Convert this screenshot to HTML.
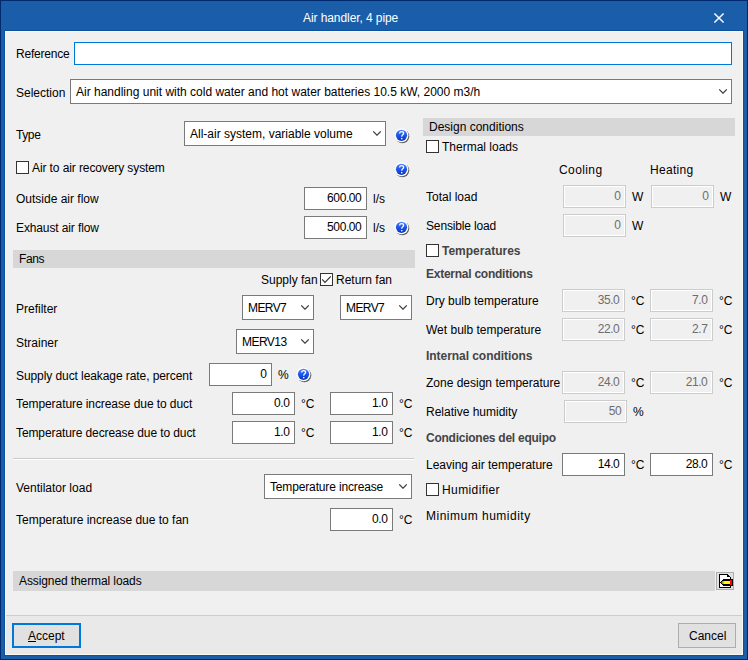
<!DOCTYPE html>
<html><head><meta charset="utf-8"><title>Air handler, 4 pipe</title>
<style>
html,body{margin:0;padding:0;}
body{width:748px;height:660px;position:relative;overflow:hidden;background:#1a5ea9;font-family:"Liberation Sans",sans-serif;font-size:12px;color:#000;}
.frame{position:absolute;left:0;top:0;width:748px;height:660px;box-sizing:border-box;border:1px solid #002a6e;}
.client{position:absolute;left:5px;top:31px;width:738px;height:624px;background:#f0f0f0;box-sizing:border-box;border:1px solid #fbf8f2;}
.edge{position:absolute;left:4px;top:30px;width:740px;height:626px;box-sizing:border-box;border:1px solid #0a52a0;}
.t{position:absolute;line-height:14px;white-space:pre;}
.wt{color:#fff;}
.gr{color:#6d6d6d;}
.num{letter-spacing:-0.4px;}
.b{font-weight:bold;color:#444;letter-spacing:-0.25px;}
.ab{position:absolute;}
.bar{position:absolute;background:#d7d7d7;}
.sep{position:absolute;background:#c9c9c9;}
.sep2{position:absolute;background:#cdcdcd;}
.inp{position:absolute;box-sizing:border-box;background:#fff;border:1px solid #7a7a7a;}
.inp.dis{background:#f0f0f0;border-color:#cccccc;box-shadow:inset 0 0 0 1px #fff;}
.cmb{position:absolute;box-sizing:border-box;background:#fff;border:1px solid #7a7a7a;}
.chk{position:absolute;width:13px;height:13px;box-sizing:border-box;background:#fff;border:1px solid #333;}
svg{display:block;}
svg.ab{position:absolute;}
</style></head><body>
<div class="frame"></div>
<div class="edge"></div>
<div class="client"></div>
<div class="t wt" style="left:303px;top:11px;letter-spacing:-0.08px">Air handler, 4 pipe</div>
<svg class="ab" style="left:713px;top:12px" width="12" height="12" viewBox="0 0 12 12"><path d="M1.4 1.4 L10.6 10.6 M10.6 1.4 L1.4 10.6" stroke="#fff" stroke-width="1.45"/></svg>
<div class="t" style="left:16px;top:47px;letter-spacing:-0.2px">Reference</div>
<div class="ab" style="left:74px;top:42px;width:658px;height:23px;background:#fff;border:1px solid #0078d7;box-sizing:border-box"></div>
<div class="t" style="left:16px;top:86px;">Selection</div>
<div class="cmb" style="left:70px;top:79px;width:662px;height:25px;"></div>
<div class="t" style="left:76px;top:85px;">Air handling unit with cold water and hot water batteries 10.5 kW, 2000 m3/h</div>
<div class="ab" style="left:719px;top:89px;width:8px;height:5px"><svg width="8" height="5" viewBox="0 0 8 5"><path d="M0.2 0.4 L4 4.2 L7.8 0.4" fill="none" stroke="#404040" stroke-width="1.25"/></svg></div>
<div class="t" style="left:16px;top:128px;letter-spacing:-0.4px">Type</div>
<div class="cmb" style="left:184px;top:121px;width:202px;height:25px;"></div>
<div class="t" style="left:190px;top:127px;">All-air system, variable volume</div>
<div class="ab" style="left:373px;top:131px;width:8px;height:5px"><svg width="8" height="5" viewBox="0 0 8 5"><path d="M0.2 0.4 L4 4.2 L7.8 0.4" fill="none" stroke="#404040" stroke-width="1.25"/></svg></div>
<div class="ab" style="left:394px;top:128px;width:18px;height:18px"><svg width="18" height="18" viewBox="0 0 18 18">
<defs><linearGradient id="hg" x1="0" y1="0" x2="0" y2="1"><stop offset="0" stop-color="#4f86ff"/><stop offset="0.5" stop-color="#1f55ee"/><stop offset="1" stop-color="#0a36b8"/></linearGradient></defs>
<circle cx="8.4" cy="8.3" r="6.9" fill="#303030" opacity="0.75"/>
<circle cx="7.5" cy="7.3" r="6.9" fill="#fff"/>
<circle cx="7.5" cy="7.3" r="5.6" fill="url(#hg)"/>
<path d="M5.6 5.5 Q5.7 3.5 7.6 3.5 Q9.6 3.5 9.6 5.3 Q9.6 6.3 8.5 7.0 Q7.7 7.5 7.7 8.8" fill="none" stroke="#fff" stroke-width="1.25"/>
<rect x="7.05" y="10.0" width="1.35" height="1.35" fill="#fff"/>
</svg></div>
<div class="chk" style="left:16px;top:161px;"></div>
<div class="t" style="left:32px;top:161px;letter-spacing:-0.1px">Air to air recovery system</div>
<div class="ab" style="left:394px;top:162px;width:18px;height:18px"><svg width="18" height="18" viewBox="0 0 18 18">
<defs><linearGradient id="hg" x1="0" y1="0" x2="0" y2="1"><stop offset="0" stop-color="#4f86ff"/><stop offset="0.5" stop-color="#1f55ee"/><stop offset="1" stop-color="#0a36b8"/></linearGradient></defs>
<circle cx="8.4" cy="8.3" r="6.9" fill="#303030" opacity="0.75"/>
<circle cx="7.5" cy="7.3" r="6.9" fill="#fff"/>
<circle cx="7.5" cy="7.3" r="5.6" fill="url(#hg)"/>
<path d="M5.6 5.5 Q5.7 3.5 7.6 3.5 Q9.6 3.5 9.6 5.3 Q9.6 6.3 8.5 7.0 Q7.7 7.5 7.7 8.8" fill="none" stroke="#fff" stroke-width="1.25"/>
<rect x="7.05" y="10.0" width="1.35" height="1.35" fill="#fff"/>
</svg></div>
<div class="t" style="left:16px;top:192px;">Outside air flow</div>
<div class="inp" style="left:304px;top:187px;width:63px;height:23px;"></div>
<div class="t num" style="right:386.6px;top:191px;">600.00</div>
<div class="t" style="left:373px;top:192px;">l/s</div>
<div class="t" style="left:16px;top:221px;letter-spacing:-0.12px">Exhaust air flow</div>
<div class="inp" style="left:304px;top:216px;width:63px;height:23px;"></div>
<div class="t num" style="right:386.6px;top:220px;">500.00</div>
<div class="t" style="left:373px;top:221px;">l/s</div>
<div class="ab" style="left:394px;top:220px;width:18px;height:18px"><svg width="18" height="18" viewBox="0 0 18 18">
<defs><linearGradient id="hg" x1="0" y1="0" x2="0" y2="1"><stop offset="0" stop-color="#4f86ff"/><stop offset="0.5" stop-color="#1f55ee"/><stop offset="1" stop-color="#0a36b8"/></linearGradient></defs>
<circle cx="8.4" cy="8.3" r="6.9" fill="#303030" opacity="0.75"/>
<circle cx="7.5" cy="7.3" r="6.9" fill="#fff"/>
<circle cx="7.5" cy="7.3" r="5.6" fill="url(#hg)"/>
<path d="M5.6 5.5 Q5.7 3.5 7.6 3.5 Q9.6 3.5 9.6 5.3 Q9.6 6.3 8.5 7.0 Q7.7 7.5 7.7 8.8" fill="none" stroke="#fff" stroke-width="1.25"/>
<rect x="7.05" y="10.0" width="1.35" height="1.35" fill="#fff"/>
</svg></div>
<div class="bar" style="left:13px;top:250px;width:402px;height:18px;"></div>
<div class="t" style="left:19px;top:252px;letter-spacing:-0.4px">Fans</div>
<div class="t" style="left:261px;top:273px;">Supply fan</div>
<div class="chk" style="left:320px;top:273px;"></div>
<svg class="ab" style="left:320px;top:273px" width="13" height="13" viewBox="0 0 13 13"><path d="M2.2 6.4 L5 9.3 L10.8 3.4" fill="none" stroke="#333" stroke-width="1.2"/></svg>
<div class="t" style="left:336px;top:273px;">Return fan</div>
<div class="t" style="left:16px;top:302px;">Prefilter</div>
<div class="cmb" style="left:242px;top:295px;width:72px;height:25px;"></div>
<div class="t" style="left:248px;top:301px;letter-spacing:-0.6px">MERV7</div>
<div class="ab" style="left:301px;top:305px;width:8px;height:5px"><svg width="8" height="5" viewBox="0 0 8 5"><path d="M0.2 0.4 L4 4.2 L7.8 0.4" fill="none" stroke="#404040" stroke-width="1.25"/></svg></div>
<div class="cmb" style="left:340px;top:295px;width:72px;height:25px;"></div>
<div class="t" style="left:346px;top:301px;letter-spacing:-0.6px">MERV7</div>
<div class="ab" style="left:399px;top:305px;width:8px;height:5px"><svg width="8" height="5" viewBox="0 0 8 5"><path d="M0.2 0.4 L4 4.2 L7.8 0.4" fill="none" stroke="#404040" stroke-width="1.25"/></svg></div>
<div class="t" style="left:16px;top:336px;">Strainer</div>
<div class="cmb" style="left:236px;top:329px;width:78px;height:25px;"></div>
<div class="t" style="left:242px;top:335px;letter-spacing:-0.55px">MERV13</div>
<div class="ab" style="left:301px;top:339px;width:8px;height:5px"><svg width="8" height="5" viewBox="0 0 8 5"><path d="M0.2 0.4 L4 4.2 L7.8 0.4" fill="none" stroke="#404040" stroke-width="1.25"/></svg></div>
<div class="t" style="left:16px;top:369px;letter-spacing:-0.08px">Supply duct leakage rate, percent</div>
<div class="inp" style="left:209px;top:363px;width:63px;height:23px;"></div>
<div class="t num" style="right:481.6px;top:367px;">0</div>
<div class="t" style="left:278px;top:368px;">%</div>
<div class="ab" style="left:296px;top:367px;width:18px;height:18px"><svg width="18" height="18" viewBox="0 0 18 18">
<defs><linearGradient id="hg" x1="0" y1="0" x2="0" y2="1"><stop offset="0" stop-color="#4f86ff"/><stop offset="0.5" stop-color="#1f55ee"/><stop offset="1" stop-color="#0a36b8"/></linearGradient></defs>
<circle cx="8.4" cy="8.3" r="6.9" fill="#303030" opacity="0.75"/>
<circle cx="7.5" cy="7.3" r="6.9" fill="#fff"/>
<circle cx="7.5" cy="7.3" r="5.6" fill="url(#hg)"/>
<path d="M5.6 5.5 Q5.7 3.5 7.6 3.5 Q9.6 3.5 9.6 5.3 Q9.6 6.3 8.5 7.0 Q7.7 7.5 7.7 8.8" fill="none" stroke="#fff" stroke-width="1.25"/>
<rect x="7.05" y="10.0" width="1.35" height="1.35" fill="#fff"/>
</svg></div>
<div class="t" style="left:16px;top:397px;letter-spacing:-0.08px">Temperature increase due to duct</div>
<div class="inp" style="left:232px;top:392px;width:63px;height:23px;"></div>
<div class="t num" style="right:458.6px;top:396px;">0.0</div>
<div class="t" style="left:301px;top:397px;">°C</div>
<div class="inp" style="left:330px;top:392px;width:63px;height:23px;"></div>
<div class="t num" style="right:360.6px;top:396px;">1.0</div>
<div class="t" style="left:399px;top:397px;">°C</div>
<div class="t" style="left:16px;top:426px;letter-spacing:-0.1px">Temperature decrease due to duct</div>
<div class="inp" style="left:232px;top:421px;width:63px;height:23px;"></div>
<div class="t num" style="right:458.6px;top:425px;">1.0</div>
<div class="t" style="left:301px;top:426px;">°C</div>
<div class="inp" style="left:330px;top:421px;width:63px;height:23px;"></div>
<div class="t num" style="right:360.6px;top:425px;">1.0</div>
<div class="t" style="left:399px;top:426px;">°C</div>
<div class="sep" style="left:13px;top:458px;width:401px;height:1px;"></div>
<div class="ab" style="left:13px;top:459px;width:401px;height:1px;background:#fff"></div>
<div class="t" style="left:16px;top:481px;">Ventilator load</div>
<div class="cmb" style="left:264px;top:474px;width:148px;height:25px;"></div>
<div class="t" style="left:270px;top:480px;letter-spacing:-0.15px">Temperature increase</div>
<div class="ab" style="left:399px;top:484px;width:8px;height:5px"><svg width="8" height="5" viewBox="0 0 8 5"><path d="M0.2 0.4 L4 4.2 L7.8 0.4" fill="none" stroke="#404040" stroke-width="1.25"/></svg></div>
<div class="t" style="left:16px;top:513px;">Temperature increase due to fan</div>
<div class="inp" style="left:330px;top:508px;width:63px;height:23px;"></div>
<div class="t num" style="right:360.6px;top:512px;">0.0</div>
<div class="t" style="left:399px;top:513px;">°C</div>
<div class="bar" style="left:423px;top:118px;width:312px;height:18px;"></div>
<div class="t" style="left:429px;top:120px;">Design conditions</div>
<div class="chk" style="left:426px;top:140px;"></div>
<div class="t" style="left:442px;top:140px;">Thermal loads</div>
<div class="t" style="left:559px;top:163px;letter-spacing:0.4px">Cooling</div>
<div class="t" style="left:650px;top:163px;letter-spacing:0.3px">Heating</div>
<div class="t" style="left:426px;top:190px;">Total load</div>
<div class="inp dis" style="left:563px;top:185px;width:63px;height:23px;"></div>
<div class="t num gr" style="right:127.6px;top:189px;">0</div>
<div class="t" style="left:632px;top:190px;">W</div>
<div class="inp dis" style="left:651px;top:185px;width:63px;height:23px;"></div>
<div class="t num gr" style="right:39.6px;top:189px;">0</div>
<div class="t" style="left:720px;top:190px;">W</div>
<div class="t" style="left:426px;top:219px;letter-spacing:-0.15px">Sensible load</div>
<div class="inp dis" style="left:563px;top:214px;width:63px;height:23px;"></div>
<div class="t num gr" style="right:127.6px;top:218px;">0</div>
<div class="t" style="left:632px;top:219px;">W</div>
<div class="chk" style="left:426px;top:244px;"></div>
<div class="t b" style="left:442px;top:244px;letter-spacing:0px">Temperatures</div>
<div class="t b" style="left:426px;top:267px;">External conditions</div>
<div class="t" style="left:426px;top:294px;">Dry bulb temperature</div>
<div class="inp dis" style="left:562px;top:289px;width:63px;height:23px;"></div>
<div class="t num gr" style="right:128.6px;top:293px;">35.0</div>
<div class="t" style="left:631px;top:294px;">°C</div>
<div class="inp dis" style="left:650px;top:289px;width:63px;height:23px;"></div>
<div class="t num gr" style="right:40.6px;top:293px;">7.0</div>
<div class="t" style="left:719px;top:294px;">°C</div>
<div class="t" style="left:426px;top:323px;">Wet bulb temperature</div>
<div class="inp dis" style="left:562px;top:318px;width:63px;height:23px;"></div>
<div class="t num gr" style="right:128.6px;top:322px;">22.0</div>
<div class="t" style="left:631px;top:323px;">°C</div>
<div class="inp dis" style="left:650px;top:318px;width:63px;height:23px;"></div>
<div class="t num gr" style="right:40.6px;top:322px;">2.7</div>
<div class="t" style="left:719px;top:323px;">°C</div>
<div class="t b" style="left:426px;top:349px;letter-spacing:-0.05px">Internal conditions</div>
<div class="t" style="left:426px;top:376px;">Zone design temperature</div>
<div class="inp dis" style="left:562px;top:371px;width:63px;height:23px;"></div>
<div class="t num gr" style="right:128.6px;top:375px;">24.0</div>
<div class="t" style="left:631px;top:376px;">°C</div>
<div class="inp dis" style="left:650px;top:371px;width:63px;height:23px;"></div>
<div class="t num gr" style="right:40.6px;top:375px;">21.0</div>
<div class="t" style="left:719px;top:376px;">°C</div>
<div class="t" style="left:426px;top:405px;">Relative humidity</div>
<div class="inp dis" style="left:564px;top:400px;width:63px;height:23px;"></div>
<div class="t num gr" style="right:126.6px;top:404px;">50</div>
<div class="t" style="left:633px;top:405px;">%</div>
<div class="t b" style="left:426px;top:431px;">Condiciones del equipo</div>
<div class="t" style="left:426px;top:458px;">Leaving air temperature</div>
<div class="inp" style="left:562px;top:453px;width:63px;height:23px;"></div>
<div class="t num" style="right:128.6px;top:457px;">14.0</div>
<div class="t" style="left:631px;top:458px;">°C</div>
<div class="inp" style="left:650px;top:453px;width:63px;height:23px;"></div>
<div class="t num" style="right:40.6px;top:457px;">28.0</div>
<div class="t" style="left:719px;top:458px;">°C</div>
<div class="chk" style="left:426px;top:483px;"></div>
<div class="t" style="left:442px;top:483px;letter-spacing:0.4px">Humidifier</div>
<div class="t" style="left:426px;top:509px;letter-spacing:0.5px">Minimum humidity</div>
<div class="bar" style="left:13px;top:571px;width:702px;height:20px;"></div>
<div class="t" style="left:19px;top:574px;letter-spacing:-0.1px">Assigned thermal loads</div>
<div class="ab" style="left:716px;top:572px;width:18px;height:18px;box-sizing:border-box;border:1px solid #adadad;background:#e1e1e1"></div>
<svg class="ab" style="left:716px;top:572px" width="18" height="18" viewBox="0 0 18 18" shape-rendering="crispEdges"><rect x="3" y="2" width="12" height="14" fill="#fff"/><rect x="3" y="2" width="1" height="14" fill="#000"/><rect x="3" y="2" width="9" height="1" fill="#000"/><rect x="3" y="15" width="12" height="1" fill="#000"/><rect x="12" y="3" width="1" height="1" fill="#000"/><rect x="13" y="4" width="1" height="1" fill="#000"/><rect x="14" y="5" width="1" height="11" fill="#000"/><rect x="11" y="3" width="1" height="2" fill="#000"/><rect x="12" y="4" width="1" height="1" fill="#000"/><rect x="12" y="2" width="3" height="1" fill="#e1e1e1"/><rect x="13" y="3" width="2" height="1" fill="#e1e1e1"/><rect x="14" y="4" width="1" height="1" fill="#e1e1e1"/><rect x="7" y="7" width="10" height="7" fill="#000"/><rect x="6" y="8" width="1" height="5" fill="#000"/><rect x="5" y="9" width="1" height="3" fill="#000"/><rect x="4" y="10" width="1" height="1" fill="#000"/><rect x="6" y="9" width="1" height="3" fill="#9a9a00"/><rect x="7" y="9" width="1" height="3" fill="#c8c800"/><rect x="5" y="10" width="1" height="1" fill="#6a6a00"/><rect x="8" y="9" width="6" height="3" fill="#ffff00"/><rect x="14" y="8" width="2" height="5" fill="#ff0000"/></svg>
<div class="ab" style="left:6px;top:616px;width:736px;height:38px;background:#e9e9e9"></div>
<div class="sep2" style="left:6px;top:615px;width:736px;height:1px;"></div>
<div class="ab" style="left:12px;top:623px;width:69px;height:25px;box-sizing:border-box;border:2px solid #0078d7;background:#e1e1e1"></div>
<div class="t" style="left:28px;top:629px;"><u>A</u>ccept</div>
<div class="ab" style="left:678px;top:623px;width:58px;height:25px;box-sizing:border-box;border:1px solid #adadad;background:#e1e1e1"></div>
<div class="t" style="left:689px;top:629px;">Cancel</div>
</body></html>
